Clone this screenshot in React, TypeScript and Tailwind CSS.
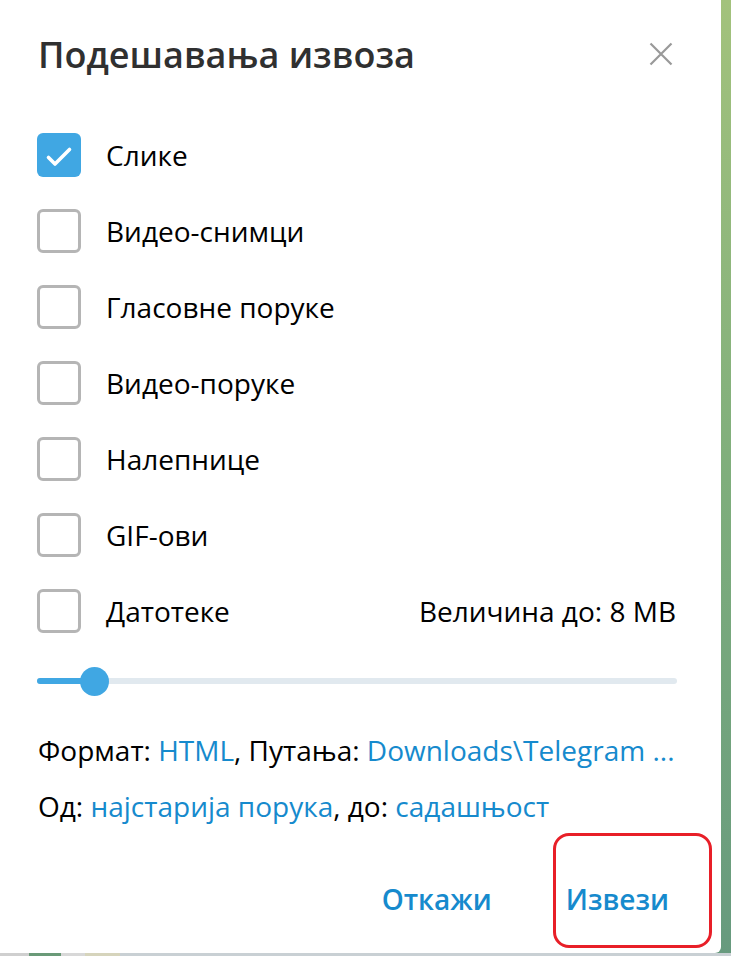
import React, { useState } from "react";

const options = [
  "Слике",
  "Видео-снимци",
  "Гласовне поруке",
  "Видео-поруке",
  "Налепнице",
  "GIF-ови",
  "Датотеке",
];

function Checkbox({ checked }: { checked: boolean }) {
  if (checked) {
    return (
      <div className="w-[44px] h-[44px] rounded-[6px] bg-[#40a7e3]">
        <svg width="44" height="44" viewBox="0 0 44 44" fill="none">
          <path d="M11.5 24.5l6.5 6.5L32.5 16.5" stroke="white" strokeWidth="3.6" strokeLinecap="round" strokeLinejoin="round" />
        </svg>
      </div>
    );
  }
  return <div className="w-[44px] h-[44px] rounded-[6px] border-[3px] border-[#b5b5b5] bg-white" />;
}

export default function App() {
  const [checked, setChecked] = useState<boolean[]>([true, false, false, false, false, false, false]);
  const sizePercent = 9;

  return (
    <div
      className="w-[731px] h-[956px] overflow-hidden bg-gradient-to-b from-[#a3c27c] via-[#7fae7c] to-[#679a7e]"
      style={{ fontFamily: '"Open Sans", "Noto Sans", sans-serif' }}
    >
      <div className="relative w-[721px] h-[953px] bg-white rounded-br-[6px] flex flex-col">
        {/* Header */}
        <div className="h-[117px] flex items-start justify-between pl-[38px] pr-[48px] pt-[30px]">
          <h1 className="text-[36px] leading-[50px] font-semibold text-[#303030]">Подешавања извоза</h1>
          <button className="mt-[12px] w-[24px] h-[24px] flex items-center justify-center">
            <svg width="24" height="24" viewBox="0 0 24 24" fill="none">
              <path d="M1.5 1.5l21 21M22.5 1.5l-21 21" stroke="#999999" strokeWidth="2.2" />
            </svg>
          </button>
        </div>

        {/* Options */}
        <div className="flex flex-col">
          {options.map((label, i) => (
            <div
              key={label}
              className="h-[76px] flex items-center pl-[37px] pr-[45px] cursor-pointer"
              onClick={() => setChecked(checked.map((c, j) => (j === i ? !c : c)))}
            >
              <Checkbox checked={checked[i]} />
              <span className="ml-[25px] text-[28px] text-black">{label}</span>
              {i === options.length - 1 && (
                <span className="ml-auto text-[28px] text-black">Величина до: 8 MB</span>
              )}
            </div>
          ))}
        </div>

        {/* Slider */}
        <div className="h-[64px] flex items-center pl-[37px] pr-[44px]">
          <div className="relative w-full h-[6px] rounded-full bg-[#e1e9ef]">
            <div className="absolute left-0 top-0 h-full rounded-full bg-[#40a7e3]" style={{ width: `${sizePercent}%` }} />
            <div
              className="absolute top-1/2 w-[29px] h-[29px] -mt-[14.5px] -ml-[14.5px] rounded-full bg-[#40a7e3]"
              style={{ left: `${sizePercent}%` }}
            />
          </div>
        </div>

        {/* Info */}
        <div className="pl-[38px] mt-[13px] text-[28px] text-black">
          <p className="h-[48px] leading-[48px]">
            Формат: <span className="text-[#168acd]">HTML</span>, Путања:{" "}
            <span className="text-[#168acd]">Downloads\Telegram ...</span>
          </p>
          <p className="h-[56px] leading-[56px] mt-[4px]">
            Од: <span className="text-[#168acd]">најстарија порука</span>, до:{" "}
            <span className="text-[#168acd]">садашњост</span>
          </p>
        </div>

        {/* Buttons */}
        <div className="flex-1 flex items-center justify-end pr-[52px] gap-[74px] pt-[10px]">
          <button className="text-[28px] font-semibold text-[#168acd]">Откажи</button>
          <button className="text-[28px] font-semibold text-[#168acd]">Извези</button>
        </div>

        {/* Highlight overlay */}
        <div className="absolute left-[553px] top-[833px] w-[159px] h-[115px] rounded-[16px] border-[3px] border-[#e81f28] pointer-events-none" />
      </div>
      <div className="h-[3px] flex">
        <div className="w-[29px] bg-[#cfcfcf]" />
        <div className="w-[32px] bg-[#6a9a78]" />
        <div className="w-[24px] bg-[#d8d8d8]" />
        <div className="w-[35px] bg-[#d6d4bc]" />
        <div className="flex-1 bg-[#c9d0d4]" />
      </div>
    </div>
  );
}
